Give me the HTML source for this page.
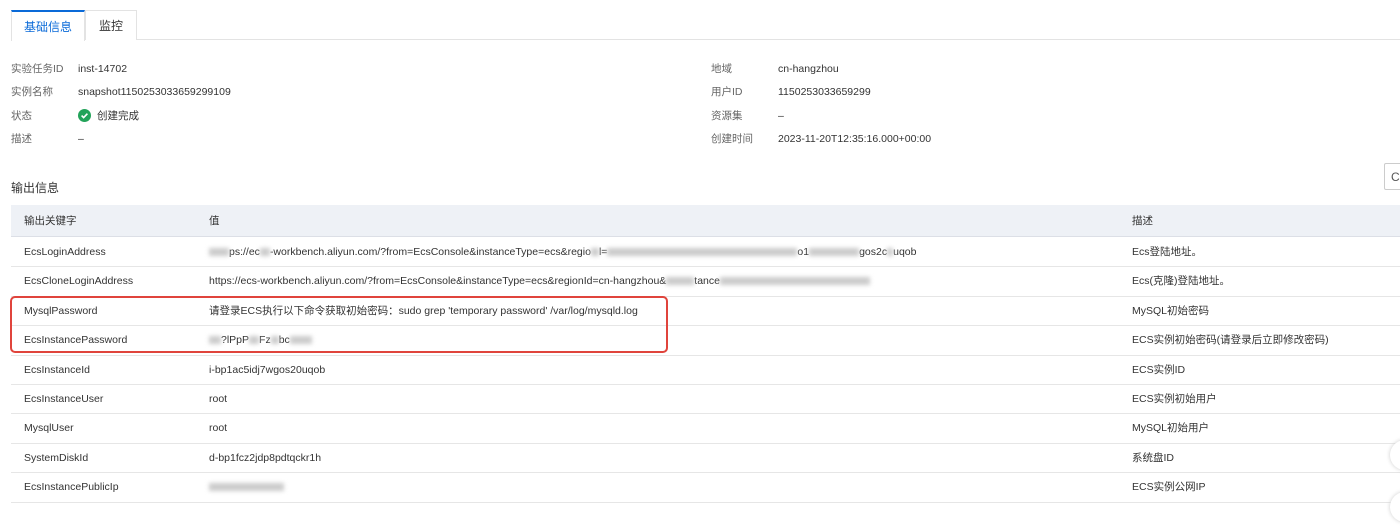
<!DOCTYPE html>
<html><head><meta charset="utf-8"><style>
*{margin:0;padding:0;box-sizing:border-box}
body{width:1400px;height:531px;overflow:hidden;background:#fff;font-family:"Liberation Sans","Noto Sans CJK SC",sans-serif;font-size:10.5px;color:#333;position:relative}
.a{position:absolute;white-space:nowrap;line-height:14px}
.tabline{position:absolute;left:11px;right:0;top:39px;height:1px;background:#e3e3e3}
.tab{position:absolute;top:10px;height:30px;line-height:30px;text-align:center;font-size:12px;border:1px solid #e3e3e3;border-bottom:none;background:#fff}
.lbl{color:#666}
.hdr{position:absolute;left:11px;right:0;top:205px;height:32px;background:#eef1f6;border-bottom:1px solid #dcdfe6}
.row{position:absolute;left:11px;right:0;height:1px;background:#e6e6e6}
.blur{display:inline-block;height:8px;background:#ccc;filter:blur(2px);vertical-align:middle}
</style></head><body>
<div class="tabline"></div>
<div class="tab" style="left:11px;width:74px;color:#0a6ad8;border-top:2px solid #0a6ad8;height:31px">基础信息</div>
<div class="tab" style="left:85px;width:52px;color:#333">监控</div>

<div class="a lbl" style="left:11px;top:62px">实验任务ID</div><div class="a" style="left:78px;top:62px">inst-14702</div>
<div class="a lbl" style="left:11px;top:85px">实例名称</div><div class="a" style="left:78px;top:85px">snapshot1150253033659299109</div>
<div class="a lbl" style="left:11px;top:109px">状态</div>
<svg class="a" style="left:78px;top:109px" width="13" height="13" viewBox="0 0 13 13"><circle cx="6.5" cy="6.5" r="6.5" fill="#23a35a"/><path d="M3.6 6.6l2 2 3.8-3.9" stroke="#fff" stroke-width="1.6" fill="none"/></svg>
<div class="a" style="left:97px;top:109px">创建完成</div>
<div class="a lbl" style="left:11px;top:132px">描述</div><div class="a" style="left:78px;top:132px">–</div>

<div class="a lbl" style="left:711px;top:62px">地域</div><div class="a" style="left:778px;top:62px">cn-hangzhou</div>
<div class="a lbl" style="left:711px;top:85px">用户ID</div><div class="a" style="left:778px;top:85px">1150253033659299</div>
<div class="a lbl" style="left:711px;top:109px">资源集</div><div class="a" style="left:778px;top:109px">–</div>
<div class="a lbl" style="left:711px;top:132px">创建时间</div><div class="a" style="left:778px;top:132px">2023-11-20T12:35:16.000+00:00</div>

<div class="a" style="left:11px;top:181px;font-size:12px">输出信息</div>
<div class="a" style="left:1384px;top:163px;width:30px;height:27px;border:1px solid #ccc;border-radius:2px;padding:6px 0 0 6px;color:#555;font-size:12px">C</div>

<div class="hdr"></div>
<div class="a" style="left:24px;top:214px">输出关键字</div>
<div class="a" style="left:209px;top:214px">值</div>
<div class="a" style="left:1132px;top:214px">描述</div>

<div class="row" style="top:266px"></div><div class="row" style="top:296px"></div><div class="row" style="top:325px"></div><div class="row" style="top:355px"></div><div class="row" style="top:384px"></div><div class="row" style="top:413px"></div><div class="row" style="top:443px"></div><div class="row" style="top:472px"></div><div class="row" style="top:502px"></div>

<div class="a" style="left:24px;top:245px">EcsLoginAddress</div>
<div class="a" style="left:209px;top:245px"><span class="blur" style="width:20px"></span>ps://ec<span class="blur" style="width:10px"></span>-workbench.aliyun.com/?from=EcsConsole&amp;instanceType=ecs&amp;regio<span class="blur" style="width:8px"></span>l=<span class="blur" style="width:190px"></span>o1<span class="blur" style="width:50px"></span>gos2c<span class="blur" style="width:6px"></span>uqob</div>
<div class="a" style="left:1132px;top:245px">Ecs登陆地址。</div>

<div class="a" style="left:24px;top:274px">EcsCloneLoginAddress</div>
<div class="a" style="left:209px;top:274px">https://ecs-workbench.aliyun.com/?from=EcsConsole&amp;instanceType=ecs&amp;regionId=cn-hangzhou&amp;<span class="blur" style="width:28px"></span>tance<span class="blur" style="width:150px"></span></div>
<div class="a" style="left:1132px;top:274px">Ecs(克隆)登陆地址。</div>

<div class="a" style="left:24px;top:304px">MysqlPassword</div>
<div class="a" style="left:209px;top:304px">请登录ECS执行以下命令获取初始密码：sudo grep 'temporary password' /var/log/mysqld.log</div>
<div class="a" style="left:1132px;top:304px">MySQL初始密码</div>

<div class="a" style="left:24px;top:333px">EcsInstancePassword</div>
<div class="a" style="left:209px;top:333px"><span class="blur" style="width:12px"></span>?lPpP<span class="blur" style="width:10px"></span>Fz<span class="blur" style="width:8px"></span>bc<span class="blur" style="width:22px"></span></div>
<div class="a" style="left:1132px;top:333px">ECS实例初始密码(请登录后立即修改密码)</div>

<div class="a" style="left:24px;top:363px">EcsInstanceId</div><div class="a" style="left:209px;top:363px">i-bp1ac5idj7wgos20uqob</div><div class="a" style="left:1132px;top:363px">ECS实例ID</div>
<div class="a" style="left:24px;top:392px">EcsInstanceUser</div><div class="a" style="left:209px;top:392px">root</div><div class="a" style="left:1132px;top:392px">ECS实例初始用户</div>
<div class="a" style="left:24px;top:421px">MysqlUser</div><div class="a" style="left:209px;top:421px">root</div><div class="a" style="left:1132px;top:421px">MySQL初始用户</div>
<div class="a" style="left:24px;top:451px">SystemDiskId</div><div class="a" style="left:209px;top:451px">d-bp1fcz2jdp8pdtqckr1h</div><div class="a" style="left:1132px;top:451px">系统盘ID</div>
<div class="a" style="left:24px;top:480px">EcsInstancePublicIp</div><div class="a" style="left:209px;top:480px"><span class="blur" style="width:75px"></span></div><div class="a" style="left:1132px;top:480px">ECS实例公网IP</div>

<div class="a" style="left:10px;top:296px;width:658px;height:57px;border:2px solid #e0443c;border-radius:5px"></div>
<div class="a" style="left:1390px;top:440px;width:30px;height:30px;border-radius:50%;box-shadow:0 0 4px #ccc;background:#fff"></div>
<div class="a" style="left:1390px;top:492px;width:30px;height:30px;border-radius:50%;box-shadow:0 0 4px #ccc;background:#fff"></div>
</body></html>
